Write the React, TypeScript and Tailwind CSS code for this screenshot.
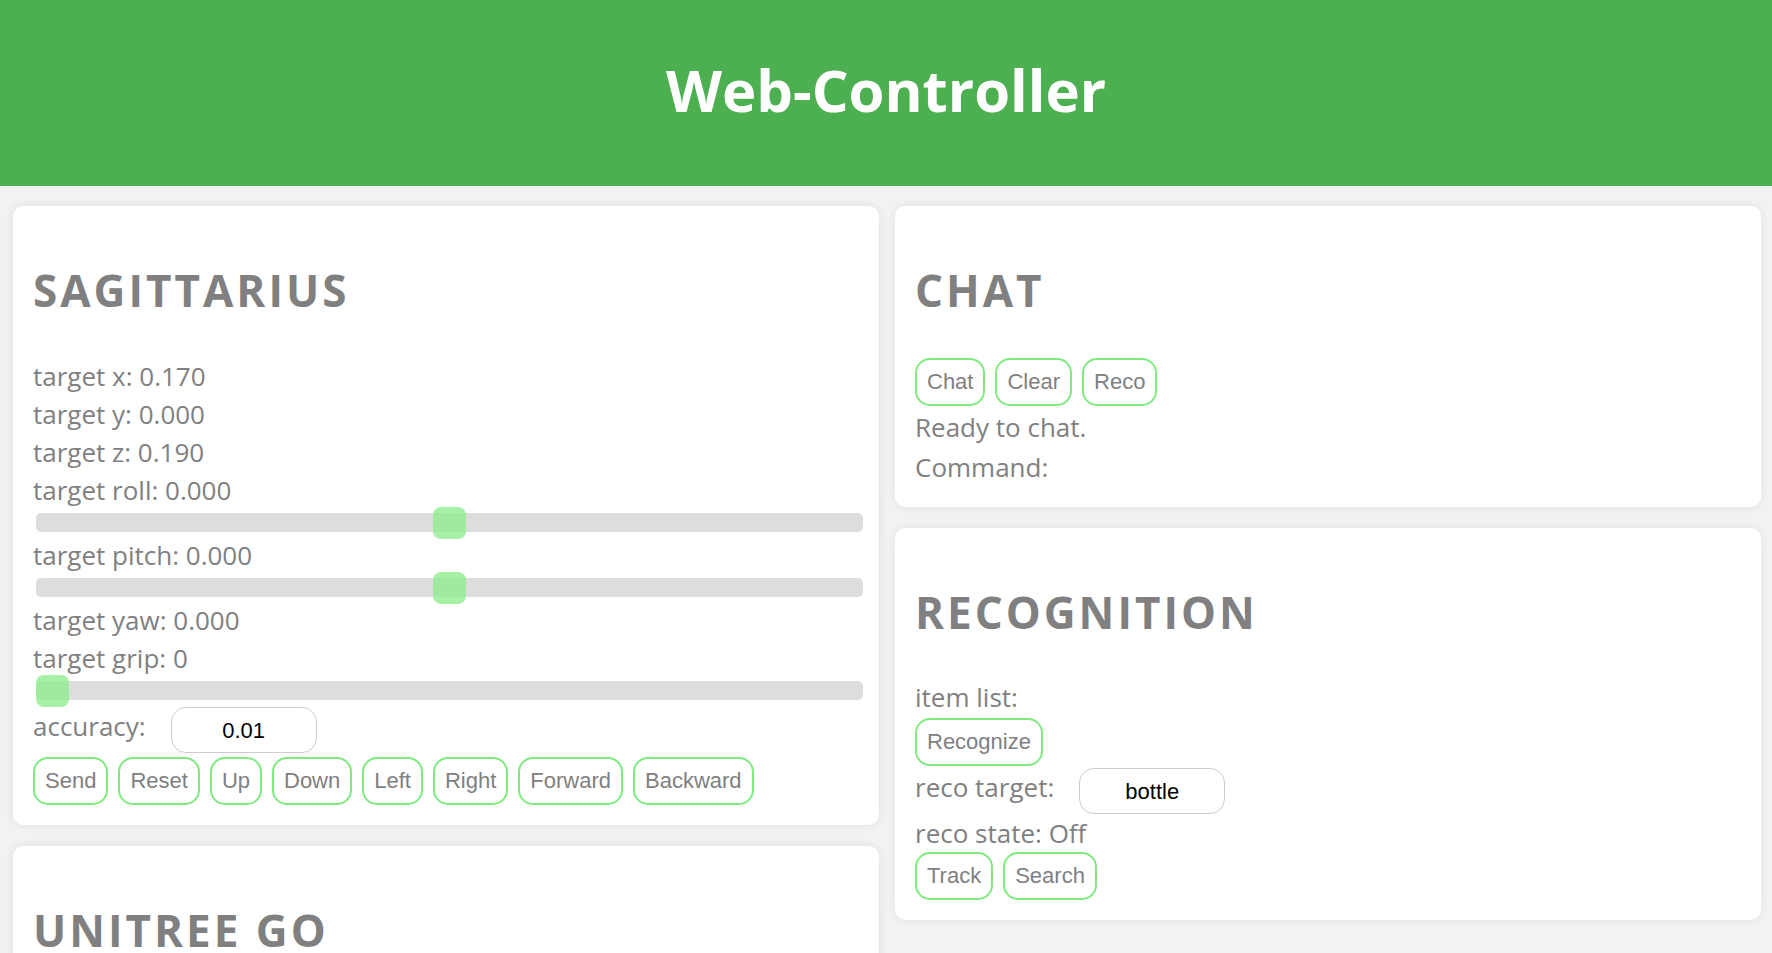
import React from "react";

const Btn = ({ label }: { label: string }) => (
  <button className="h-[48px] px-[10px] border-2 border-[#80ea80] rounded-[15px] bg-white text-[22px] leading-[24px] text-[#808080] font-['Liberation_Sans',Arial,sans-serif] flex items-center justify-center">
    {label}
  </button>
);

const Line = ({ children }: { children: React.ReactNode }) => (
  <div className="text-[26px] leading-[38px] text-[#808080] whitespace-nowrap">{children}</div>
);

const Slider = ({ pos }: { pos: "mid" | "start" }) => (
  <div className="relative h-[27px] ml-[3px] mr-[-4px] flex items-center">
    <div className="w-full h-[19px] rounded-[5px] bg-[#dddddd]" />
    <div
      className={
        "absolute top-1/2 -translate-y-1/2 w-[33px] h-[32px] rounded-[8px] bg-[#90ee90] opacity-80 " +
        (pos === "mid" ? "left-[calc(50%-16.5px)]" : "left-0")
      }
    />
  </div>
);

const Heading = ({ children }: { children: React.ReactNode }) => (
  <h2 className="mt-[42px] h-[44px] text-[44px] leading-[44px] font-bold tracking-[3px] text-[#808080] whitespace-nowrap">
    {children}
  </h2>
);

const Card = ({ children, className = "" }: { children: React.ReactNode; className?: string }) => (
  <section className={"bg-white rounded-[10px] shadow-[0_0_10px_rgba(0,0,0,0.08)] px-[20px] pt-[20px] pb-[20px] " + className}>
    {children}
  </section>
);

const Field = ({ label, value }: { label: string; value: string }) => (
  <div className="flex items-start">
    <span className="text-[26px] leading-[38px] text-[#808080] whitespace-nowrap">{label}</span>
    <div className="ml-[25px] w-[146px] h-[46px] border border-[#cccccc] rounded-[15px] flex items-center justify-center text-[22px] text-black font-['Liberation_Sans',Arial,sans-serif]">
      {value}
    </div>
  </div>
);

export default function App() {
  return (
    <div className="min-h-screen bg-[#f2f2f2] font-['Open_Sans',sans-serif]">
      <header className="h-[186px] bg-[#4caf50] flex items-center justify-center pb-[6px]">
        <h1 className="text-[58px] leading-[58px] font-bold text-white">Web-Controller</h1>
      </header>
      <main className="grid grid-cols-2 gap-x-[16px] pl-[13px] pr-[11px] pt-[20px] pb-[20px] items-start">
        <div className="flex flex-col gap-[21px]">
          <Card>
            <Heading>SAGITTARIUS</Heading>
            <div className="mt-[45px]">
              <Line>target x: 0.170</Line>
              <Line>target y: 0.000</Line>
              <Line>target z: 0.190</Line>
              <Line>target roll: 0.000</Line>
              <Slider pos="mid" />
              <Line>target pitch: 0.000</Line>
              <Slider pos="mid" />
              <Line>target yaw: 0.000</Line>
              <Line>target grip: 0</Line>
              <Slider pos="start" />
              <div className="pt-[3px]">
                <Field label="accuracy:" value="0.01" />
              </div>
              <div className="mt-[4px] flex gap-[10px]">
                {["Send", "Reset", "Up", "Down", "Left", "Right", "Forward", "Backward"].map((b) => (
                  <Btn key={b} label={b} />
                ))}
              </div>
            </div>
          </Card>
          <Card className="min-h-[420px]">
            <Heading>UNITREE GO</Heading>
          </Card>
        </div>
        <div className="flex flex-col gap-[21px]">
          <Card className="pb-[19px]">
            <Heading>CHAT</Heading>
            <div className="mt-[46px] flex gap-[10px]">
              {["Chat", "Clear", "Reco"].map((b) => (
                <Btn key={b} label={b} />
              ))}
            </div>
            <div className="mt-[1px] text-[26px] leading-[40px] text-[#808080]">Ready to chat.</div>
            <div className="text-[26px] leading-[40px] text-[#808080]">Command:</div>
          </Card>
          <Card>
            <Heading>RECOGNITION</Heading>
            <div className="mt-[44px]">
              <Line>item list:</Line>
              <div className="mt-[2px] flex">
                <Btn label="Recognize" />
              </div>
              <div className="mt-[2px]">
                <Field label="reco target:" value="bottle" />
              </div>
              <Line>reco state: Off</Line>
              <div className="flex gap-[10px]">
                <Btn label="Track" />
                <Btn label="Search" />
              </div>
            </div>
          </Card>
        </div>
      </main>
    </div>
  );
}
